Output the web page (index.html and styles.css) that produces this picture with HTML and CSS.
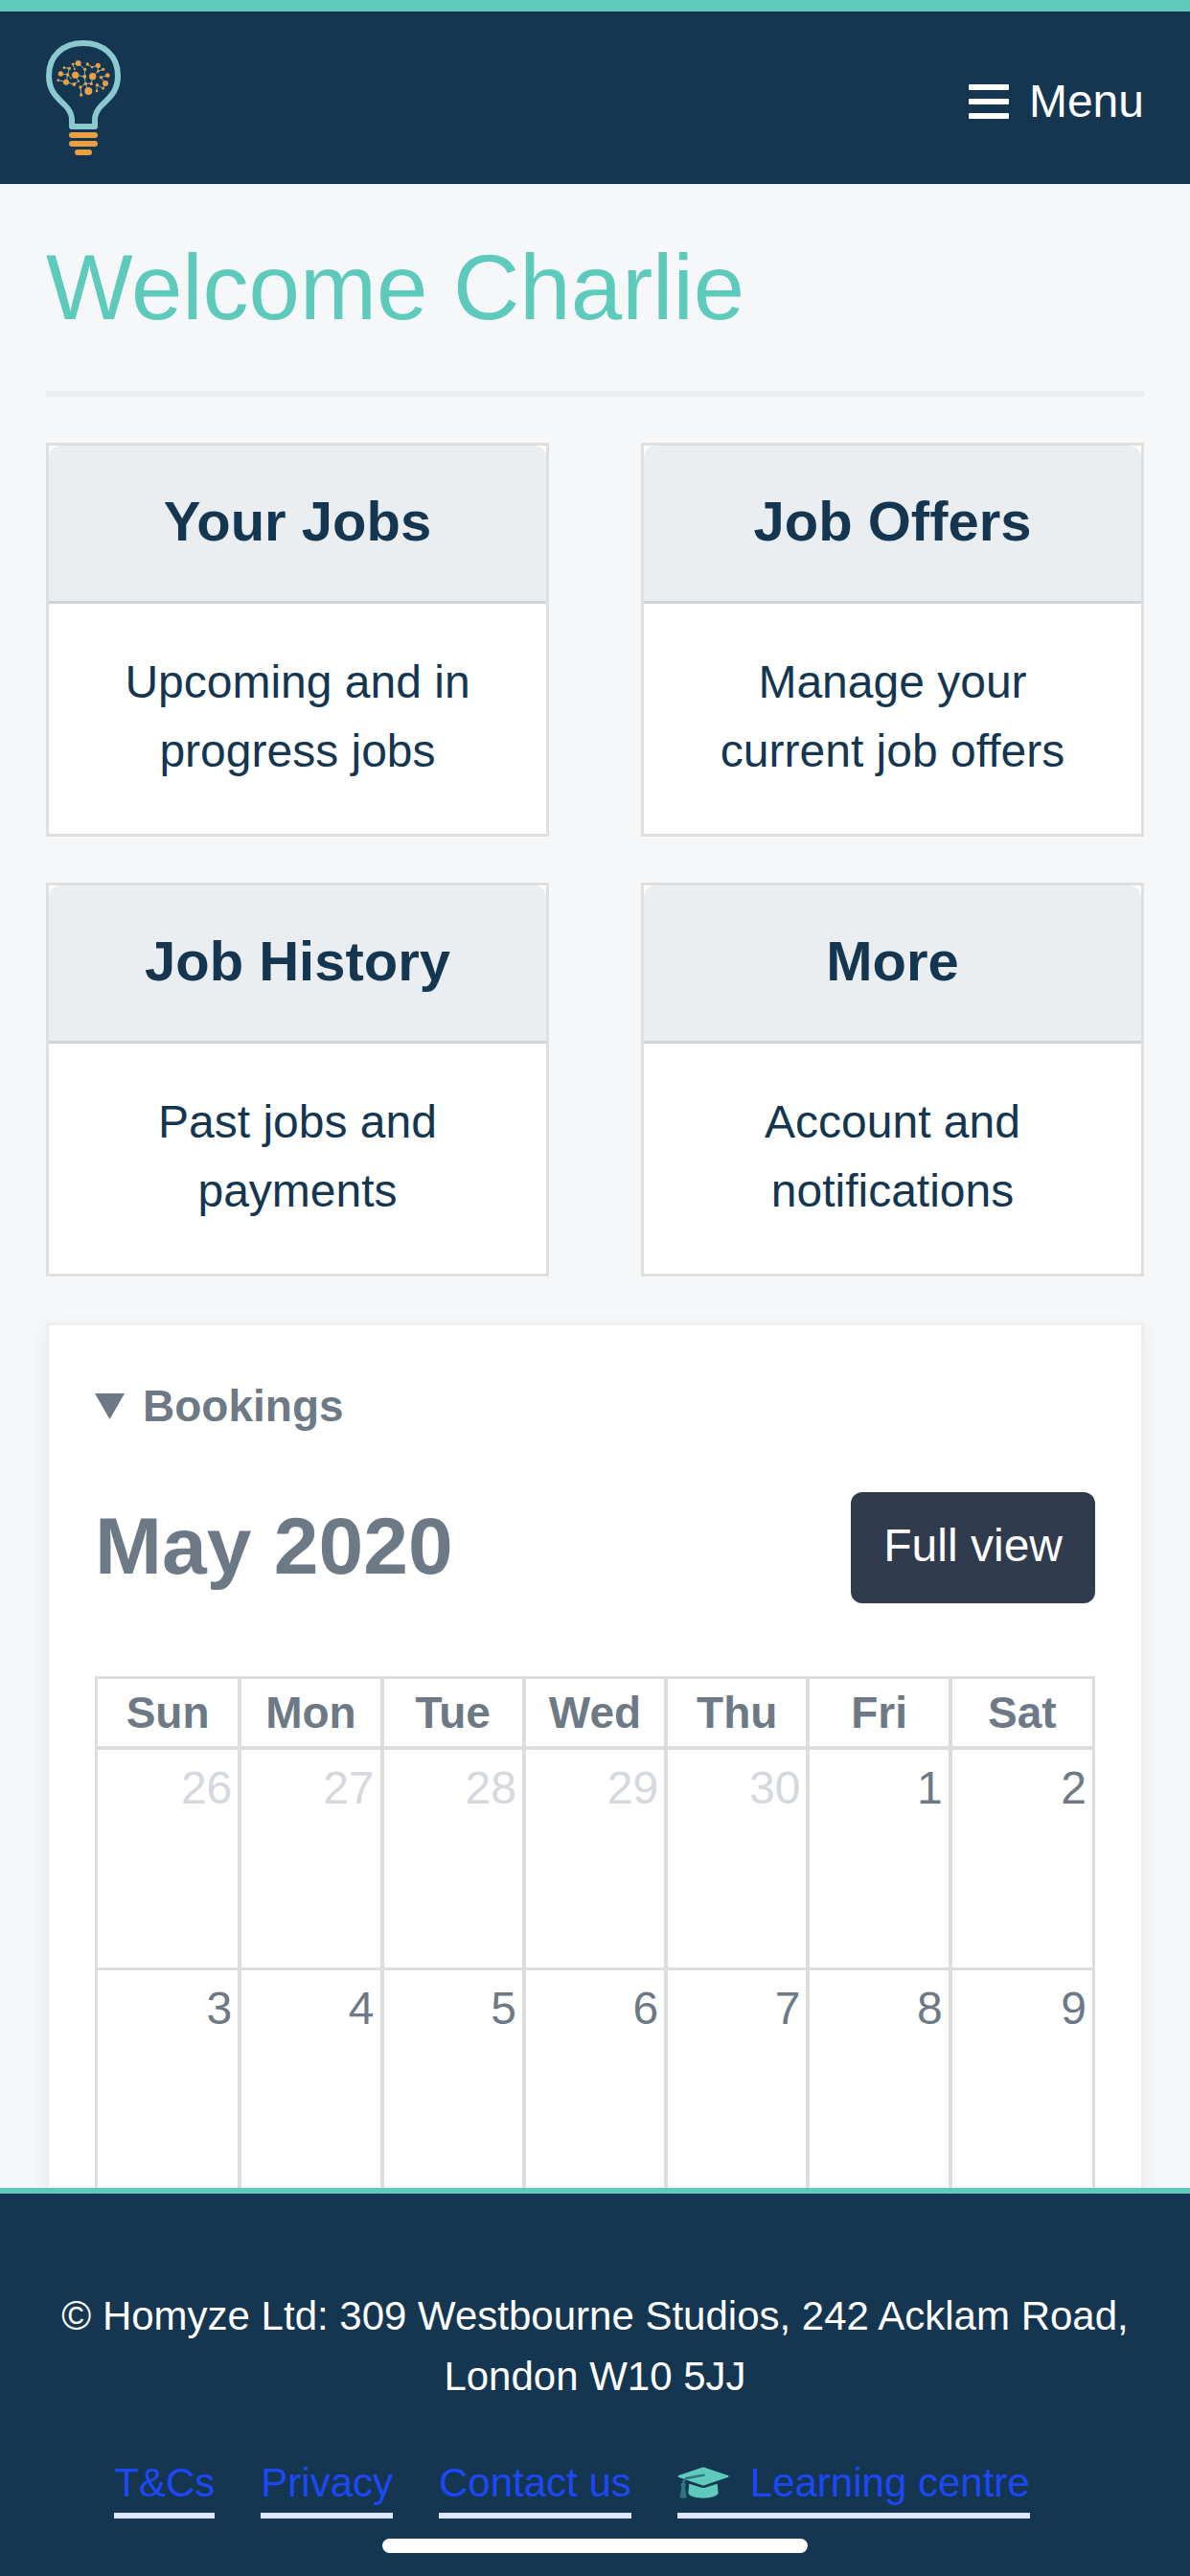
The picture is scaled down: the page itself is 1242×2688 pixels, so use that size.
FILE: index.html
```html
<!DOCTYPE html>
<html lang="en">
<head>
    <meta charset="UTF-8">
    <meta name="viewport" content="width=device-width, initial-scale=1.0">
    <title>Homyze - Dashboard</title>
    <link rel="stylesheet" href="styles.css">
</head>
<body>
    <header class="header">
        <a href="#" class="logo" aria-label="Homyze">
            <svg width="78" height="120" viewBox="0 0 78 120" fill="none">
                <path d="M27 90V83C27 77 24 72 20 68C11 59 3 53 3 37C3 16 18 3 39 3C60 3 75 16 75 37C75 53 67 59 58 68C54 72 51 77 51 83V90Z" stroke="#8ac9cf" stroke-width="6" stroke-linejoin="round"/>
                <g fill="#eb9f40">
                    <rect x="24" y="96" width="30" height="6" rx="3"/>
                    <rect x="24" y="105" width="30" height="6" rx="3"/>
                    <rect x="30" y="114" width="18" height="6" rx="3"/>
                </g>
                <!-- brain network -->
                <g transform="translate(-48 -42) scale(.3333)">
                    <path d="M190 231L212 234L217 214L201 212M212 234L207 257L182 251M207 257L232 264L246 254L236 235L265 240L266 217L245 198L228 201L234 217M212 234L222 245M265 240L268 262L286 262L290 239L307 223L323 217M307 223V205L288 210L274 201M268 262L252 273L254 297M268 262L277 285M337 236L316 242L330 261L323 277L304 266L303 285" stroke="#8ac9cf" stroke-width="2.5"/>
                    <g fill="#eb9f40">
                        <circle cx="190" cy="231" r="8"/>
                        <circle cx="201" cy="212" r="4"/>
                        <circle cx="217" cy="214" r="5"/>
                        <circle cx="212" cy="234" r="5"/>
                        <circle cx="182" cy="251" r="4"/>
                        <circle cx="207" cy="257" r="9"/>
                        <circle cx="222" cy="245" r="2"/>
                        <circle cx="232" cy="264" r="6"/>
                        <circle cx="246" cy="254" r="3"/>
                        <circle cx="236" cy="235" r="11"/>
                        <circle cx="228" cy="201" r="4"/>
                        <circle cx="234" cy="217" r="3"/>
                        <circle cx="245" cy="198" r="9"/>
                        <circle cx="266" cy="217" r="5"/>
                        <circle cx="265" cy="240" r="6"/>
                        <circle cx="274" cy="201" r="5"/>
                        <circle cx="288" cy="210" r="4"/>
                        <circle cx="307" cy="205" r="8"/>
                        <circle cx="323" cy="217" r="5"/>
                        <circle cx="307" cy="223" r="4"/>
                        <circle cx="290" cy="239" r="11"/>
                        <circle cx="268" cy="262" r="5"/>
                        <circle cx="286" cy="262" r="5"/>
                        <circle cx="252" cy="273" r="5"/>
                        <circle cx="254" cy="297" r="5"/>
                        <circle cx="277" cy="285" r="12"/>
                        <circle cx="337" cy="236" r="7"/>
                        <circle cx="316" cy="242" r="5"/>
                        <circle cx="330" cy="261" r="9"/>
                        <circle cx="323" cy="277" r="4"/>
                        <circle cx="304" cy="266" r="5"/>
                        <circle cx="303" cy="285" r="4"/>
                    </g>
                </g>
            </svg>
        </a>
        <button type="button" class="menu-btn">
            <svg width="42" height="36" viewBox="0 0 42 36" fill="#fff">
                <rect width="42" height="6" rx="1"/>
                <rect y="15" width="42" height="6" rx="1"/>
                <rect y="30" width="42" height="6" rx="1"/>
            </svg>
            Menu
        </button>
    </header>

    <main class="main">
        <h1>Welcome Charlie</h1>
        <hr class="divider">

        <div class="cards">
            <a href="#" class="card">
                <h2 class="card-title">Your Jobs</h2>
                <p class="card-text">Upcoming and in progress jobs</p>
            </a>
            <a href="#" class="card">
                <h2 class="card-title">Job Offers</h2>
                <p class="card-text">Manage your current job offers</p>
            </a>
            <a href="#" class="card">
                <h2 class="card-title">Job History</h2>
                <p class="card-text">Past jobs and payments</p>
            </a>
            <a href="#" class="card">
                <h2 class="card-title">More</h2>
                <p class="card-text">Account and notifications</p>
            </a>
        </div>

        <details class="bookings" open>
            <summary>
                <svg width="31" height="27" viewBox="0 0 31 27" fill="currentColor"><path d="M0 0H31L15.5 27Z"/></svg>
                Bookings
            </summary>
            <div class="toolbar">
                <h2 class="month">May 2020</h2>
                <button type="button" class="btn">Full view</button>
            </div>
            <table class="calendar">
                <thead>
                    <tr>
                        <th>Sun</th>
                        <th>Mon</th>
                        <th>Tue</th>
                        <th>Wed</th>
                        <th>Thu</th>
                        <th>Fri</th>
                        <th>Sat</th>
                    </tr>
                </thead>
                <tbody>
                    <tr>
                        <td class="other-month">26</td>
                        <td class="other-month">27</td>
                        <td class="other-month">28</td>
                        <td class="other-month">29</td>
                        <td class="other-month">30</td>
                        <td>1</td>
                        <td>2</td>
                    </tr>
                    <tr>
                        <td>3</td>
                        <td>4</td>
                        <td>5</td>
                        <td>6</td>
                        <td>7</td>
                        <td>8</td>
                        <td>9</td>
                    </tr>
                </tbody>
            </table>
        </details>
    </main>

    <footer class="footer">
        <p>© Homyze Ltd: 309 Westbourne Studios, 242 Acklam Road, London W10 5JJ</p>
        <nav class="footer-links">
            <a href="#">T&amp;Cs</a>
            <a href="#">Privacy</a>
            <a href="#">Contact us</a>
            <a href="#">
                <svg width="54" height="33" viewBox="52 67 162 99">
                    <g fill="#5dcabb">
                        <path d="M129 69Q133 68 137 69L210 94Q216 97 210 100L137 125Q133 126 129 125L56 100Q51 97 56 94Z"/>
                        <path d="M89 120L127 132Q133 134 139 132L177 120L180 149C180 158 159 165 133 165C107 165 86 158 86 149Z"/>
                    </g>
                    <path d="M135 93L82 103Q71 106 70 122" fill="none" stroke="#31737e" stroke-width="7" stroke-linecap="round"/>
                    <path d="M70 116A8 8 0 0 1 76 130L81 161Q81 165 77 165H63Q59 165 60 161L65 130A8 8 0 0 1 70 116Z" fill="#31737e"/>
                </svg>
                Learning centre
            </a>
        </nav>
    </footer>

    <div class="home-indicator"></div>
</body>
</html>
```

FILE: styles.css
```css
* {
    box-sizing: border-box;
}

body {
    display: flex;
    flex-direction: column;
    height: 100vh;
    margin: 0;
    font-family: "Liberation Sans", Arial, sans-serif;
    font-size: 48px;
    line-height: 72px;
    color: #153650;
    background: #f6f7f9;
}

h1,
h2,
p {
    margin: 0;
}

button {
    font: inherit;
    border: none;
    cursor: pointer;
}

svg {
    display: block;
    flex-shrink: 0;
}

.header {
    display: flex;
    flex-shrink: 0;
    justify-content: space-between;
    align-items: center;
    padding: 30px 48px;
    background: #153650;
    border-top: 12px solid #5dcabb;
}

.menu-btn {
    display: flex;
    align-items: center;
    gap: 21px;
    padding: 8px 0 0;
    color: white;
    background: none;
}

.main {
    flex: 1;
    min-height: 0;
    padding: 48px 48px 0;
    overflow: hidden;
}

h1 {
    font-size: 96px;
    font-weight: 400;
    line-height: 120px;
    color: #5dcabb;
}

.divider {
    height: 6px;
    margin: 48px 0;
    border: none;
    background: #eaeef1;
}

.cards {
    display: grid;
    grid-template-columns: 1fr 1fr;
    gap: 48px 96px;
    margin-bottom: 48px;
}

.card {
    border: 3px solid #dfdfdf;
    background: white;
    color: inherit;
    text-align: center;
    text-decoration: none;
}

.card-title {
    padding: 46px 48px 50px;
    font-size: 58px;
    line-height: 66px;
    background: #eaeef1;
    border-bottom: 3px solid #d0d3d5;
    border-radius: 12px 12px 0 0;
}

.card-text {
    padding: 46px 48px 50px;
}

.bookings {
    padding: 48px;
    color: #6e7986;
    background: white;
    border: 3px solid #eee;
    box-shadow: 0 6px 18px rgba(21, 54, 80, 0.07);
}

.bookings summary {
    display: flex;
    align-items: center;
    gap: 19px;
    font-size: 46px;
    font-weight: 700;
    list-style: none;
    cursor: pointer;
}

.toolbar {
    display: flex;
    justify-content: space-between;
    align-items: center;
    margin: 54px 0 76px;
}

.month {
    padding-bottom: 4px;
    font-size: 84px;
    line-height: 96px;
}

.btn {
    padding: 20px 34px 24px;
    color: white;
    background: #303c4e;
    border-radius: 12px;
}

.calendar {
    width: 100%;
    table-layout: fixed;
    border: 3px solid #ddd;
    border-spacing: 0;
}

.calendar th,
.calendar td {
    border: solid #ddd;
    border-width: 0 2px 3px;
}

.calendar th {
    padding: 0;
    font-size: 46px;
    line-height: 70px;
    border-bottom-width: 4px;
}

.calendar td {
    height: 230px;
    padding: 4px 6px;
    text-align: right;
    vertical-align: top;
}

.calendar tr > :first-child {
    border-left: none;
}

.calendar tr > :last-child {
    border-right: none;
}

.calendar .other-month {
    color: #d5d8dd;
}

.footer {
    flex-shrink: 0;
    padding: 96px 48px 60px;
    font-size: 42px;
    line-height: 63px;
    color: white;
    text-align: center;
    background: #153650;
    border-top: 6px solid #5dcabb;
}

.footer-links {
    display: flex;
    justify-content: center;
    margin-top: 48px;
}

.footer-links a {
    display: flex;
    align-items: center;
    gap: 22px;
    margin-right: 48px;
    color: #1c48f5;
    text-decoration: none;
    border-bottom: 6px solid #dfe6fb;
}

/* sits on top of the footer */
.home-indicator {
    position: fixed;
    bottom: 24px;
    left: 50%;
    width: 444px;
    height: 15px;
    margin-left: -222px;
    border-radius: 8px;
    background: white;
}
```
